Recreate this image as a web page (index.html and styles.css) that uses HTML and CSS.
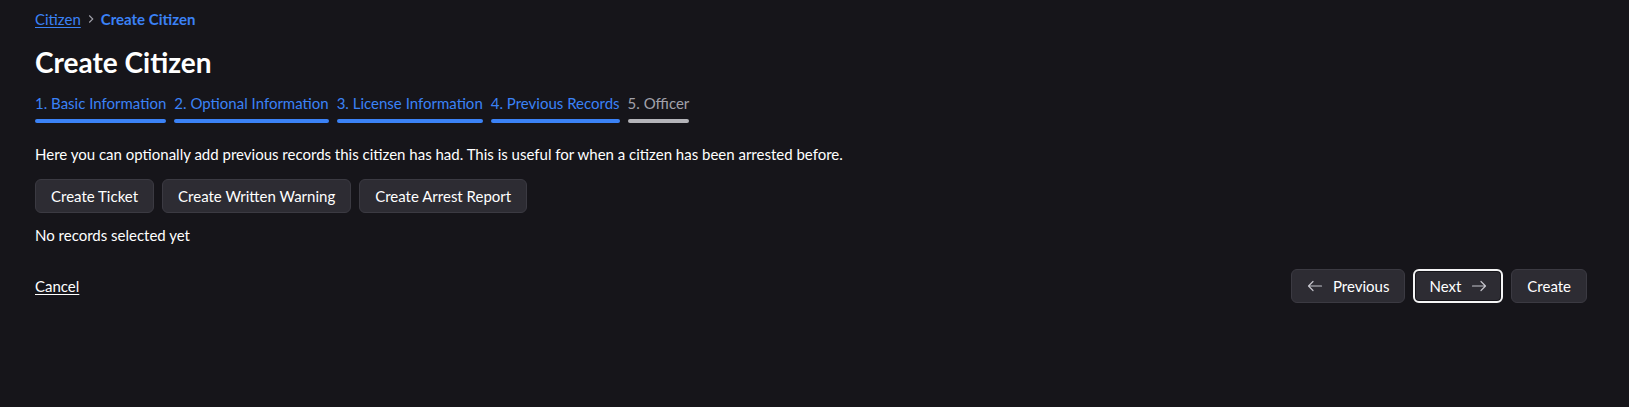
FILE: index.html
```html
<!DOCTYPE html>
<html lang="en">
<head>
<meta charset="utf-8">
<title>Create Citizen</title>
<link rel="stylesheet" href="styles.css">
</head>
<body>
<main class="page">
  <nav class="breadcrumb">
    <a class="crumb-link" href="#">Citizen</a>
    <svg class="crumb-sep" width="14" height="14" viewBox="0 0 16 16" fill="none" stroke="currentColor" stroke-width="1.3"><path d="M6 4l4 4-4 4"/></svg>
    <span class="crumb-current">Create Citizen</span>
  </nav>
  <h1 class="title">Create Citizen</h1>
  <ol class="steps">
    <li class="step done">1. Basic Information</li>
    <li class="step done">2. Optional Information</li>
    <li class="step done">3. License Information</li>
    <li class="step done">4. Previous Records</li>
    <li class="step">5. Officer</li>
  </ol>
  <p class="desc">Here you can optionally add previous records this citizen has had. This is useful for when a citizen has been arrested before.</p>
  <div class="actions">
    <button class="btn">Create Ticket</button>
    <button class="btn">Create Written Warning</button>
    <button class="btn">Create Arrest Report</button>
  </div>
  <p class="empty">No records selected yet</p>
  <footer class="footer">
    <a class="cancel" href="#">Cancel</a>
    <div class="nav-buttons">
      <button class="btn btn-icon">
        <svg class="arrow" width="16" height="16" viewBox="0 0 16 16" fill="none" stroke="currentColor" stroke-width="1.2" stroke-linecap="round" stroke-linejoin="round"><path d="M14.5 8H1.5M6 3.5L1.5 8 6 12.5"/></svg>
        Previous
      </button>
      <button class="btn btn-icon btn-focus">
        Next
        <svg class="arrow" width="16" height="16" viewBox="0 0 16 16" fill="none" stroke="currentColor" stroke-width="1.2" stroke-linecap="round" stroke-linejoin="round"><path d="M1.5 8h13M10 3.5L14.5 8 10 12.5"/></svg>
      </button>
      <button class="btn">Create</button>
    </div>
  </footer>
</main>
</body>
</html>
```
FILE: styles.css
```css
html, body {
  margin: 0;
  background: #16151a;
}
body {
  color: #ffffff;
  font-family: "Lato", "Noto Sans", sans-serif;
  font-size: 15px;
  line-height: 24px;
}
.page {
  padding: 7px 42px 0 35px;
}
.breadcrumb {
  display: flex;
  align-items: center;
  height: 24px;
  gap: 3px;
}
.crumb-link {
  color: #3b82f6;
  text-decoration: underline;
  text-underline-offset: 2px;
}
.crumb-sep {
  color: #a1a1aa;
}
.crumb-current {
  color: #3b82f6;
  font-weight: 700;
}
.title {
  margin: 13px 0 0;
  font-size: 28px;
  line-height: 36px;
  font-weight: 700;
}
.steps {
  list-style: none;
  margin: 11px 0 0;
  padding: 0;
  display: flex;
  gap: 8px;
}
.step {
  color: #a1a1aa;
}
.step::after {
  content: "";
  display: block;
  height: 4px;
  border-radius: 2px;
  background: #b4b4b9;
  margin-top: 4px;
}
.step.done { color: #3b82f6; }
.step.done::after { background: #3b82f6; }
.desc {
  margin: 19px 0 0;
}
.actions {
  display: flex;
  gap: 8px;
  margin-top: 13px;
}
.btn {
  font: inherit;
  color: #ffffff;
  background: #2d2c33;
  border: 1px solid #3b3a42;
  border-radius: 6px;
  padding: 5px 15px;
  line-height: 22px;
  height: 34px;
  cursor: pointer;
}
.empty {
  margin: 10px 0 0;
}
.footer {
  margin-top: 22px;
  display: flex;
  justify-content: space-between;
  align-items: center;
}
.cancel {
  color: #ffffff;
  text-decoration: underline;
  text-underline-offset: 2px;
}
.nav-buttons {
  display: flex;
  gap: 8px;
}
.btn-icon {
  display: flex;
  align-items: center;
  gap: 10px;
}
.arrow {
  color: #c4c4cc;
}
.btn-focus {
  border: 2px solid #f4f4f5;
  box-shadow: inset 0 0 0 1px #16151a;
  padding: 4px 14px;
}
```
